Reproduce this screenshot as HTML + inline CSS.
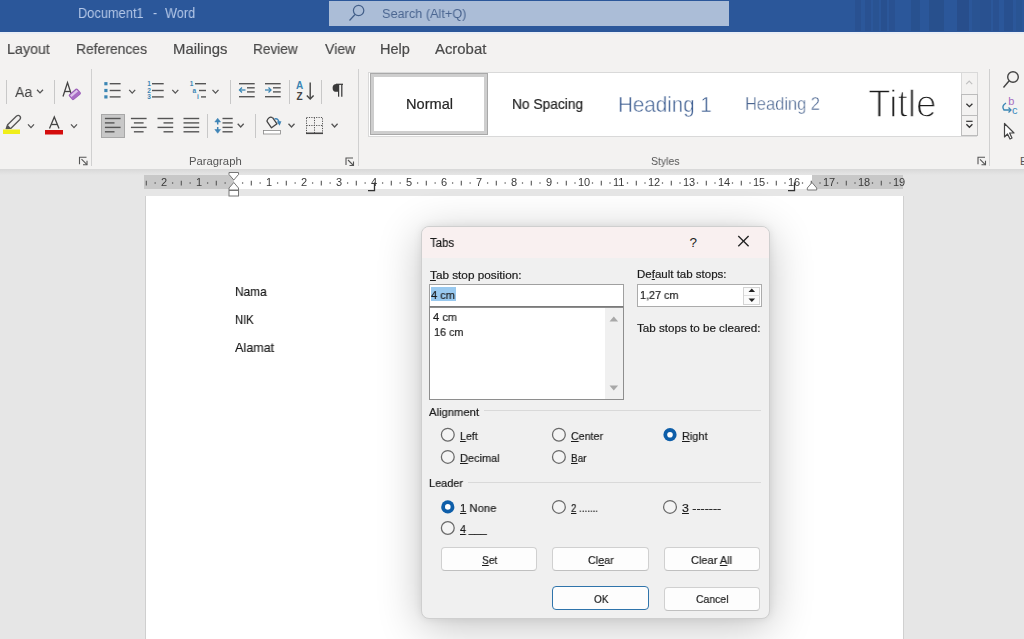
<!DOCTYPE html>
<html><head><meta charset="utf-8"><title>Tabs</title>
<style>
html,body{margin:0;padding:0;width:1024px;height:639px;overflow:hidden;background:#e6e6e6;}
body{position:relative;font-family:"Liberation Sans",sans-serif;}
.b{position:absolute;box-sizing:border-box;}
.t{position:absolute;white-space:pre;transform-origin:0 0;will-change:transform;font-family:"Liberation Sans",sans-serif;}
.t u{text-decoration:underline;text-underline-offset:0.5px;text-decoration-thickness:1px;}
svg.ov{position:absolute;left:0;top:0;}
</style></head><body>
<div class="b" style="left:0px;top:0px;width:1024px;height:32px;background:#2b579a;"></div>
<div class="b" style="left:855px;top:0px;width:6px;height:31px;background:rgba(30,45,80,0.12);"></div>
<div class="b" style="left:865px;top:0px;width:6px;height:31px;background:rgba(30,45,80,0.12);"></div>
<div class="b" style="left:873px;top:0px;width:6px;height:31px;background:rgba(30,45,80,0.1);"></div>
<div class="b" style="left:881px;top:0px;width:6px;height:31px;background:rgba(30,45,80,0.14);"></div>
<div class="b" style="left:889px;top:0px;width:6px;height:31px;background:rgba(30,45,80,0.12);"></div>
<div class="b" style="left:911px;top:0px;width:9px;height:31px;background:rgba(30,45,80,0.15);"></div>
<div class="b" style="left:929px;top:0px;width:15px;height:31px;background:rgba(30,45,80,0.17);"></div>
<div class="b" style="left:957px;top:0px;width:12px;height:31px;background:rgba(30,45,80,0.19);"></div>
<div class="b" style="left:972px;top:0px;width:8px;height:31px;background:rgba(30,45,80,0.1);"></div>
<div class="b" style="left:980px;top:0px;width:11px;height:31px;background:rgba(30,45,80,0.13);"></div>
<div class="b" style="left:993px;top:0px;width:6px;height:31px;background:rgba(30,45,80,0.12);"></div>
<div class="b" style="left:1004px;top:0px;width:9px;height:31px;background:rgba(30,45,80,0.14);"></div>
<div class="b" style="left:1016px;top:0px;width:6px;height:31px;background:rgba(30,45,80,0.08);"></div>
<div class="b" style="left:329px;top:1px;width:400px;height:25px;background:#abbdd7;"></div>
<div class="b" style="left:0px;top:32px;width:1024px;height:2px;background:#e9eef6;"></div>
<div class="b" style="left:0px;top:34px;width:1024px;height:135px;background:#f3f2f1;"></div>
<div class="b" style="left:0px;top:169px;width:1024px;height:6px;background:linear-gradient(#d8d8d8,#e6e6e6);"></div>
<div class="b" style="left:144px;top:175px;width:759px;height:14px;background:#c8c8c8;"></div>
<div class="b" style="left:233.8px;top:175px;width:578.2px;height:14px;background:#ffffff;"></div>
<div class="b" style="left:146px;top:196px;width:756.5px;height:443px;background:#ffffff;box-shadow:1px 0 0 #d0d0d0,-1px 0 0 #cfcfcf;"></div>
<div class="b" style="left:368px;top:71.5px;width:609px;height:65.5px;background:#ffffff;border:1px solid #d9d9d9;"></div>
<div class="b" style="left:369.5px;top:73px;width:118.5px;height:62px;border:1px solid #a9a9a9;box-shadow:inset 0 0 0 3px #cecece;"></div>
<div class="b" style="left:961.3px;top:72.3px;width:16.3px;height:64px;background:#f3f2f1;border:1px solid #d9d9d9;"></div>
<div class="b" style="left:961.3px;top:94px;width:16.3px;height:21.5px;border:1px solid #bcbcbc;"></div>
<div class="b" style="left:961.3px;top:114.8px;width:16.3px;height:21.5px;border:1px solid #bcbcbc;"></div>
<div class="b" style="left:100.8px;top:113.7px;width:24px;height:24.7px;background:#c8c8c8;border:1px solid #a8a8a8;"></div>
<div class="b" style="left:421px;top:226px;width:349px;height:393px;background:#f0f0f0;border:1px solid #cfcfcf;border-radius:8px;overflow:hidden;box-shadow:0 8px 44px rgba(0,0,0,0.24),0 0 8px rgba(0,0,0,0.08);"></div>
<div class="b" style="left:422px;top:227px;width:347px;height:31px;background:#f9f0f0;border-radius:7px 7px 0 0;"></div>
<div class="b" style="left:428.5px;top:284px;width:195px;height:22.5px;background:#fff;border:1px solid #a0a0a0;border-bottom-color:#7a7a7a;"></div>
<div class="b" style="left:431px;top:287.3px;width:24.7px;height:13.5px;background:#99c9ef;"></div>
<div class="b" style="left:428.5px;top:307px;width:195px;height:92.5px;background:#fff;border:1px solid #8e8e8e;"></div>
<div class="b" style="left:605px;top:308px;width:17.5px;height:90.5px;background:#f0f0f0;"></div>
<div class="b" style="left:636.5px;top:284.4px;width:125px;height:22.5px;background:#fff;border:1px solid #ababab;"></div>
<div class="b" style="left:742.5px;top:286.5px;width:17.5px;height:18.5px;background:#fbfbfb;border:1px solid #d4d4d4;"></div>
<div class="b" style="left:484.4px;top:410px;width:276.6px;height:1px;background:#d9d9d9;"></div>
<div class="b" style="left:467.8px;top:482px;width:293.2px;height:1px;background:#d9d9d9;"></div>
<div class="b" style="left:441.4px;top:546.7px;width:96px;height:24.6px;background:#fdfdfd;border:1px solid #d0d0d0;border-bottom-color:#c0c0c0;border-radius:4px;"></div>
<div class="b" style="left:552.2px;top:546.7px;width:97px;height:24.6px;background:#fdfdfd;border:1px solid #d0d0d0;border-bottom-color:#c0c0c0;border-radius:4px;"></div>
<div class="b" style="left:663.6px;top:546.7px;width:96.7px;height:24.6px;background:#fdfdfd;border:1px solid #d0d0d0;border-bottom-color:#c0c0c0;border-radius:4px;"></div>
<div class="b" style="left:663.6px;top:586.6px;width:96.7px;height:24px;background:#fdfdfd;border:1px solid #d0d0d0;border-bottom-color:#c0c0c0;border-radius:4px;"></div>
<div class="b" style="left:552.2px;top:585.9px;width:97px;height:24.6px;background:#fdfdfd;border:1.5px solid #2f74ab;border-radius:4px;"></div>
<svg class="ov" width="1024" height="639" viewBox="0 0 1024 639">
<g stroke="#c8c8c8" stroke-width="1">
<line x1="6.5" y1="80" x2="6.5" y2="104"/>
<line x1="54.5" y1="80" x2="54.5" y2="104"/>
<line x1="230.5" y1="80" x2="230.5" y2="104"/>
<line x1="289.5" y1="80" x2="289.5" y2="104"/>
<line x1="321.5" y1="80" x2="321.5" y2="104"/>
<line x1="207.5" y1="114" x2="207.5" y2="138"/>
<line x1="255.5" y1="114" x2="255.5" y2="138"/>
</g>
<g stroke="#d0d0d0" stroke-width="1">
<line x1="91.5" y1="69" x2="91.5" y2="166"/>
<line x1="358.5" y1="69" x2="358.5" y2="166"/>
<line x1="989.5" y1="69" x2="989.5" y2="166"/>
</g>
<g stroke="#44608a" stroke-width="1.25" fill="none"><circle cx="358.6" cy="10.5" r="5.2"/><line x1="355" y1="14.5" x2="349.5" y2="20.5"/></g>
<polyline points="37.0,89.7 40.0,92.9 43.0,89.7" fill="none" stroke="#555" stroke-width="1.3"/>
<polyline points="28.0,124.4 31.0,127.6 34.0,124.4" fill="none" stroke="#555" stroke-width="1.3"/>
<polyline points="71.0,124.4 74.0,127.6 77.0,124.4" fill="none" stroke="#555" stroke-width="1.3"/>
<polyline points="129.2,89.9 132.2,93.1 135.2,89.9" fill="none" stroke="#555" stroke-width="1.3"/>
<polyline points="172.3,89.9 175.3,93.1 178.3,89.9" fill="none" stroke="#555" stroke-width="1.3"/>
<polyline points="212.5,89.9 215.5,93.1 218.5,89.9" fill="none" stroke="#555" stroke-width="1.3"/>
<polyline points="237.7,123.8 240.7,127.0 243.7,123.8" fill="none" stroke="#555" stroke-width="1.3"/>
<polyline points="288.5,123.8 291.5,127.0 294.5,123.8" fill="none" stroke="#555" stroke-width="1.3"/>
<polyline points="331.6,123.8 334.6,127.0 337.6,123.8" fill="none" stroke="#555" stroke-width="1.3"/>
<g fill="none" stroke="#444" stroke-width="1.3"><polyline points="63,96.5 67.5,82.5 72,96.5"/><line x1="64.5" y1="91.5" x2="70.5" y2="91.5"/></g>
<g transform="translate(74.8,94.3) rotate(-40)"><rect x="-5" y="-3" width="10" height="6" rx="0.8" fill="#dcc3ea" stroke="#9b5fb8" stroke-width="1.3"/><rect x="-5" y="0" width="10" height="3" fill="#a86cc4"/></g>
<path d="M6.2,128.6 L7.6,124.8 L16.3,116.3 Q18.3,114.6 19.9,116.2 Q21.4,117.8 19.6,119.8 L11,128.3 Z" fill="none" stroke="#555" stroke-width="1.3" stroke-linejoin="round"/><path d="M6.2,128.6 L7.6,124.8 L11,128.3 Z" fill="#555"/>
<rect x="3" y="129.5" width="17" height="4.5" fill="#f0ee1a"/>
<g fill="none" stroke="#444" stroke-width="1.3"><polyline points="49.5,128.5 54.3,117 59,128.5"/><line x1="51.3" y1="124.5" x2="57.3" y2="124.5"/></g>
<rect x="45" y="130" width="18" height="4.5" fill="#d40d0d"/>
<rect x="104.3" y="82.10000000000001" width="3.2" height="3.2" fill="#3b86b4"/>
<line x1="109.7" y1="83.7" x2="120.6" y2="83.7" stroke="#555" stroke-width="1.4"/>
<rect x="104.3" y="88.9" width="3.2" height="3.2" fill="#3b86b4"/>
<line x1="109.7" y1="90.5" x2="120.6" y2="90.5" stroke="#555" stroke-width="1.4"/>
<rect x="104.3" y="95.30000000000001" width="3.2" height="3.2" fill="#3b86b4"/>
<line x1="109.7" y1="96.9" x2="120.6" y2="96.9" stroke="#555" stroke-width="1.4"/>
<text x="147.3" y="86.2" font-size="6.5" fill="#3b86b4" font-family="Liberation Sans" font-weight="bold">1</text>
<line x1="152" y1="83.7" x2="163.7" y2="83.7" stroke="#555" stroke-width="1.4"/>
<text x="147.3" y="93.0" font-size="6.5" fill="#3b86b4" font-family="Liberation Sans" font-weight="bold">2</text>
<line x1="152" y1="90.5" x2="163.7" y2="90.5" stroke="#555" stroke-width="1.4"/>
<text x="147.3" y="99.4" font-size="6.5" fill="#3b86b4" font-family="Liberation Sans" font-weight="bold">3</text>
<line x1="152" y1="96.9" x2="163.7" y2="96.9" stroke="#555" stroke-width="1.4"/>
<text x="189.7" y="86.2" font-size="6.5" fill="#3b86b4" font-family="Liberation Sans" font-weight="bold">1</text>
<line x1="195" y1="83.7" x2="206" y2="83.7" stroke="#555" stroke-width="1.4"/>
<text x="192.5" y="93" font-size="6.5" fill="#3b86b4" font-family="Liberation Sans" font-weight="bold">a</text>
<line x1="199" y1="90.5" x2="206" y2="90.5" stroke="#555" stroke-width="1.4"/>
<text x="197" y="99.4" font-size="6.5" fill="#3b86b4" font-family="Liberation Sans" font-weight="bold">i</text>
<line x1="201" y1="96.9" x2="206" y2="96.9" stroke="#555" stroke-width="1.4"/>
<line x1="104.9" y1="118.5" x2="120.6" y2="118.5" stroke="#555" stroke-width="1.4"/>
<line x1="104.9" y1="122.9" x2="114.5" y2="122.9" stroke="#555" stroke-width="1.4"/>
<line x1="104.9" y1="127.4" x2="120.6" y2="127.4" stroke="#555" stroke-width="1.4"/>
<line x1="104.9" y1="131.8" x2="114.5" y2="131.8" stroke="#555" stroke-width="1.4"/>
<line x1="130.9" y1="118.5" x2="146.6" y2="118.5" stroke="#555" stroke-width="1.4"/>
<line x1="133.9" y1="122.9" x2="143.6" y2="122.9" stroke="#555" stroke-width="1.4"/>
<line x1="130.9" y1="127.4" x2="146.6" y2="127.4" stroke="#555" stroke-width="1.4"/>
<line x1="133.9" y1="131.8" x2="143.6" y2="131.8" stroke="#555" stroke-width="1.4"/>
<line x1="157.5" y1="118.5" x2="173.2" y2="118.5" stroke="#555" stroke-width="1.4"/>
<line x1="163.5" y1="122.9" x2="173.2" y2="122.9" stroke="#555" stroke-width="1.4"/>
<line x1="157.5" y1="127.4" x2="173.2" y2="127.4" stroke="#555" stroke-width="1.4"/>
<line x1="163.5" y1="131.8" x2="173.2" y2="131.8" stroke="#555" stroke-width="1.4"/>
<line x1="183.5" y1="118.5" x2="199.2" y2="118.5" stroke="#555" stroke-width="1.4"/>
<line x1="183.5" y1="122.9" x2="199.2" y2="122.9" stroke="#555" stroke-width="1.4"/>
<line x1="183.5" y1="127.4" x2="199.2" y2="127.4" stroke="#555" stroke-width="1.4"/>
<line x1="183.5" y1="131.8" x2="199.2" y2="131.8" stroke="#555" stroke-width="1.4"/>
<line x1="222.5" y1="118.5" x2="232.7" y2="118.5" stroke="#555" stroke-width="1.4"/>
<line x1="222.5" y1="122.9" x2="232.7" y2="122.9" stroke="#555" stroke-width="1.4"/>
<line x1="222.5" y1="127.4" x2="232.7" y2="127.4" stroke="#555" stroke-width="1.4"/>
<line x1="222.5" y1="131.8" x2="232.7" y2="131.8" stroke="#555" stroke-width="1.4"/>
<g stroke="#3f84b6" stroke-width="1.5" fill="#3f84b6"><line x1="217.7" y1="121" x2="217.7" y2="124.5"/><path d="M214.8,122 L217.7,118.2 L220.6,122 Z" stroke-width="0.5"/><line x1="217.7" y1="127" x2="217.7" y2="130.5"/><path d="M214.8,129.5 L217.7,133.3 L220.6,129.5 Z" stroke-width="0.5"/></g>
<line x1="239" y1="83.7" x2="254.7" y2="83.7" stroke="#555" stroke-width="1.4"/>
<line x1="247" y1="87.8" x2="254.7" y2="87.8" stroke="#555" stroke-width="1.4"/>
<line x1="247" y1="91.9" x2="254.7" y2="91.9" stroke="#555" stroke-width="1.4"/>
<line x1="239" y1="96.7" x2="254.7" y2="96.7" stroke="#555" stroke-width="1.4"/>
<g stroke="#3b86b4" stroke-width="1.3" fill="none"><line x1="239.5" y1="90" x2="245.5" y2="90"/><polyline points="242,87.5 239.5,90 242,92.5"/></g>
<line x1="265" y1="83.7" x2="280.7" y2="83.7" stroke="#555" stroke-width="1.4"/>
<line x1="273" y1="87.8" x2="280.7" y2="87.8" stroke="#555" stroke-width="1.4"/>
<line x1="273" y1="91.9" x2="280.7" y2="91.9" stroke="#555" stroke-width="1.4"/>
<line x1="265" y1="96.7" x2="280.7" y2="96.7" stroke="#555" stroke-width="1.4"/>
<g stroke="#3b86b4" stroke-width="1.3" fill="none"><line x1="265" y1="90" x2="271" y2="90"/><polyline points="268.5,87.5 271,90 268.5,92.5"/></g>
<text x="296" y="89.4" font-size="10" fill="#3b86b4" font-family="Liberation Sans" font-weight="bold">A</text>
<text x="296.5" y="99.8" font-size="10" fill="#444" font-family="Liberation Sans" font-weight="bold">Z</text>
<g stroke="#444" stroke-width="1.4" fill="none"><line x1="310.2" y1="82.5" x2="310.2" y2="99"/><polyline points="306.8,95.5 310.2,99 313.6,95.5"/></g>
<g stroke="#3a3a3a" stroke-width="1.25" fill="none"><line x1="338.6" y1="84.3" x2="338.6" y2="96.7"/><line x1="341.8" y1="84.3" x2="341.8" y2="96.7"/><line x1="336" y1="84.3" x2="343" y2="84.3"/></g><path d="M338.6,84 L336.5,84 Q332.6,84 332.6,87.9 Q332.6,91.8 336.5,91.8 L338.6,91.8 Z" fill="#3a3a3a"/>
<path d="M266.8,121.2 L271.5,127.8 L277,123.8 L272.6,117.6" fill="none" stroke="#444" stroke-width="1.3" stroke-linejoin="round"/><path d="M266.8,121.2 Q268.5,116 272.6,117.6" fill="none" stroke="#444" stroke-width="1.2"/>
<path d="M274.5,119 Q278.5,117.5 279.5,124" fill="none" stroke="#3f84b6" stroke-width="1.4"/><path d="M276.8,121.5 L279.6,125.8 L281.4,121.3 Z" fill="#3f84b6"/>
<rect x="263.5" y="130.5" width="17" height="3.5" fill="#fff" stroke="#888" stroke-width="0.8"/>
<g fill="none" stroke="#555" stroke-width="1" stroke-dasharray="1.2,1.2"><rect x="306.5" y="117.5" width="16" height="16"/><line x1="314.5" y1="117.5" x2="314.5" y2="133.5"/><line x1="306.5" y1="125.5" x2="322.5" y2="125.5"/></g>
<line x1="306" y1="133.3" x2="323" y2="133.3" stroke="#444" stroke-width="1.6"/>
<g fill="none" stroke="#555" stroke-width="1.1"><polyline points="79.5,164.2 79.5,157.2 86.5,157.2"/><line x1="81.5" y1="159.2" x2="87.0" y2="164.7"/><polyline points="83.0,164.7 87.0,164.7 87.0,160.7"/></g>
<g fill="none" stroke="#555" stroke-width="1.1"><polyline points="346,165 346,158 353,158"/><line x1="348" y1="160" x2="353.5" y2="165.5"/><polyline points="349.5,165.5 353.5,165.5 353.5,161.5"/></g>
<g fill="none" stroke="#555" stroke-width="1.1"><polyline points="978,164.3 978,157.3 985,157.3"/><line x1="980" y1="159.3" x2="985.5" y2="164.8"/><polyline points="981.5,164.8 985.5,164.8 985.5,160.8"/></g>
<polyline points="966.2,84.2 969.2,81.2 972.2,84.2" fill="none" stroke="#c0c0c0" stroke-width="1.2"/>
<polyline points="966.4,103.7 969.4,106.7 972.4,103.7" fill="none" stroke="#333" stroke-width="1.3"/>
<line x1="966.2" y1="121.3" x2="972.6" y2="121.3" stroke="#333" stroke-width="1.2"/>
<polyline points="966.4,124.3 969.4,127.3 972.4,124.3" fill="none" stroke="#333" stroke-width="1.3"/>
<g fill="none" stroke="#444" stroke-width="1.4"><circle cx="1013" cy="77" r="5.3"/><line x1="1009.2" y1="80.8" x2="1003.5" y2="87.5"/></g>
<text x="1008.2" y="105.2" font-size="11" fill="#a66bc0" font-family="Liberation Sans">b</text>
<text x="1012" y="113.5" font-size="11" fill="#3b8cc0" font-family="Liberation Sans">c</text>
<path d="M1006,103 Q1001,106 1004,110 L1011,110" fill="none" stroke="#3b86b4" stroke-width="1.4"/><polyline points="1008.5,107.5 1011,110 1008.5,112.5" fill="none" stroke="#3b86b4" stroke-width="1.3"/>
<path d="M1004.5,123.5 L1004.5,137 L1007.5,134 L1010,139 L1012,138 L1009.6,133 L1014,133 Z" fill="#fff" stroke="#444" stroke-width="1.2" stroke-linejoin="round"/>
<text x="1020" y="165" font-size="11" fill="#555" font-family="Liberation Sans">E</text>
<line x1="146.3" y1="180.8" x2="146.3" y2="185.6" stroke="#555" stroke-width="1.1"/>
<line x1="181.3" y1="180.8" x2="181.3" y2="185.6" stroke="#555" stroke-width="1.1"/>
<line x1="216.3" y1="180.8" x2="216.3" y2="185.6" stroke="#555" stroke-width="1.1"/>
<line x1="251.3" y1="180.8" x2="251.3" y2="185.6" stroke="#555" stroke-width="1.1"/>
<line x1="286.3" y1="180.8" x2="286.3" y2="185.6" stroke="#555" stroke-width="1.1"/>
<line x1="321.3" y1="180.8" x2="321.3" y2="185.6" stroke="#555" stroke-width="1.1"/>
<line x1="356.3" y1="180.8" x2="356.3" y2="185.6" stroke="#555" stroke-width="1.1"/>
<line x1="391.3" y1="180.8" x2="391.3" y2="185.6" stroke="#555" stroke-width="1.1"/>
<line x1="426.3" y1="180.8" x2="426.3" y2="185.6" stroke="#555" stroke-width="1.1"/>
<line x1="461.3" y1="180.8" x2="461.3" y2="185.6" stroke="#555" stroke-width="1.1"/>
<line x1="496.3" y1="180.8" x2="496.3" y2="185.6" stroke="#555" stroke-width="1.1"/>
<line x1="531.3" y1="180.8" x2="531.3" y2="185.6" stroke="#555" stroke-width="1.1"/>
<line x1="566.3" y1="180.8" x2="566.3" y2="185.6" stroke="#555" stroke-width="1.1"/>
<line x1="601.3" y1="180.8" x2="601.3" y2="185.6" stroke="#555" stroke-width="1.1"/>
<line x1="636.3" y1="180.8" x2="636.3" y2="185.6" stroke="#555" stroke-width="1.1"/>
<line x1="671.3" y1="180.8" x2="671.3" y2="185.6" stroke="#555" stroke-width="1.1"/>
<line x1="706.3" y1="180.8" x2="706.3" y2="185.6" stroke="#555" stroke-width="1.1"/>
<line x1="741.3" y1="180.8" x2="741.3" y2="185.6" stroke="#555" stroke-width="1.1"/>
<line x1="776.3" y1="180.8" x2="776.3" y2="185.6" stroke="#555" stroke-width="1.1"/>
<line x1="811.3" y1="180.8" x2="811.3" y2="185.6" stroke="#555" stroke-width="1.1"/>
<line x1="846.3" y1="180.8" x2="846.3" y2="185.6" stroke="#555" stroke-width="1.1"/>
<line x1="881.3" y1="180.8" x2="881.3" y2="185.6" stroke="#555" stroke-width="1.1"/>
<circle cx="155.1" cy="182.9" r="0.75" fill="#555"/>
<circle cx="172.6" cy="182.9" r="0.75" fill="#555"/>
<circle cx="190.1" cy="182.9" r="0.75" fill="#555"/>
<circle cx="207.6" cy="182.9" r="0.75" fill="#555"/>
<circle cx="225.1" cy="182.9" r="0.75" fill="#555"/>
<circle cx="242.6" cy="182.9" r="0.75" fill="#555"/>
<circle cx="260.1" cy="182.9" r="0.75" fill="#555"/>
<circle cx="277.6" cy="182.9" r="0.75" fill="#555"/>
<circle cx="295.1" cy="182.9" r="0.75" fill="#555"/>
<circle cx="312.6" cy="182.9" r="0.75" fill="#555"/>
<circle cx="330.1" cy="182.9" r="0.75" fill="#555"/>
<circle cx="347.6" cy="182.9" r="0.75" fill="#555"/>
<circle cx="365.1" cy="182.9" r="0.75" fill="#555"/>
<circle cx="382.6" cy="182.9" r="0.75" fill="#555"/>
<circle cx="400.1" cy="182.9" r="0.75" fill="#555"/>
<circle cx="417.6" cy="182.9" r="0.75" fill="#555"/>
<circle cx="435.1" cy="182.9" r="0.75" fill="#555"/>
<circle cx="452.6" cy="182.9" r="0.75" fill="#555"/>
<circle cx="470.1" cy="182.9" r="0.75" fill="#555"/>
<circle cx="487.6" cy="182.9" r="0.75" fill="#555"/>
<circle cx="505.1" cy="182.9" r="0.75" fill="#555"/>
<circle cx="522.5" cy="182.9" r="0.75" fill="#555"/>
<circle cx="540.0" cy="182.9" r="0.75" fill="#555"/>
<circle cx="557.5" cy="182.9" r="0.75" fill="#555"/>
<circle cx="575.0" cy="182.9" r="0.75" fill="#555"/>
<circle cx="592.5" cy="182.9" r="0.75" fill="#555"/>
<circle cx="610.0" cy="182.9" r="0.75" fill="#555"/>
<circle cx="627.5" cy="182.9" r="0.75" fill="#555"/>
<circle cx="645.0" cy="182.9" r="0.75" fill="#555"/>
<circle cx="662.5" cy="182.9" r="0.75" fill="#555"/>
<circle cx="680.0" cy="182.9" r="0.75" fill="#555"/>
<circle cx="697.5" cy="182.9" r="0.75" fill="#555"/>
<circle cx="715.0" cy="182.9" r="0.75" fill="#555"/>
<circle cx="732.5" cy="182.9" r="0.75" fill="#555"/>
<circle cx="750.0" cy="182.9" r="0.75" fill="#555"/>
<circle cx="767.5" cy="182.9" r="0.75" fill="#555"/>
<circle cx="785.0" cy="182.9" r="0.75" fill="#555"/>
<circle cx="802.5" cy="182.9" r="0.75" fill="#555"/>
<circle cx="820.0" cy="182.9" r="0.75" fill="#555"/>
<circle cx="837.5" cy="182.9" r="0.75" fill="#555"/>
<circle cx="855.0" cy="182.9" r="0.75" fill="#555"/>
<circle cx="872.5" cy="182.9" r="0.75" fill="#555"/>
<circle cx="890.0" cy="182.9" r="0.75" fill="#555"/>
<path d="M229,172.5 L238.5,172.5 L238.5,174.5 L233.8,180 L229,174.5 Z" fill="#fff" stroke="#777" stroke-width="1"/>
<path d="M233.8,182.5 L238.5,188 L238.5,190 L229,190 L229,188 Z" fill="#fff" stroke="#777" stroke-width="1"/>
<rect x="229" y="190.5" width="9.5" height="5.5" fill="#fff" stroke="#777" stroke-width="1"/>
<path d="M374.5,182.5 L374.5,190.6 L368,190.6" fill="none" stroke="#333" stroke-width="1.3"/>
<path d="M794.5,182.5 L794.5,190.6 L788,190.6" fill="none" stroke="#333" stroke-width="1.3"/>
<path d="M812,182.5 L816.7,188 L816.7,190 L807.3,190 L807.3,188 Z" fill="#fff" stroke="#777" stroke-width="1"/>
<g stroke="#222" stroke-width="1.3" fill="none"><line x1="738.3" y1="236" x2="748.6" y2="246.3"/><line x1="748.6" y1="236" x2="738.3" y2="246.3"/></g>
<text x="689.5" y="246.5" font-size="13.5" fill="#222" font-family="Liberation Sans">?</text>
<path d="M609.5,321.5 L613.8,316.5 L618.1,321.5 Z" fill="#a8a8a8"/>
<path d="M609.5,385.5 L613.8,390.5 L618.1,385.5 Z" fill="#a8a8a8"/>
<path d="M748.5,292 L751.8,288.5 L755.1,292 Z" fill="#222"/>
<path d="M748.5,298.5 L751.8,302 L755.1,298.5 Z" fill="#222"/>
<line x1="744" y1="295.5" x2="760" y2="295.5" stroke="#e0e0e0" stroke-width="1"/>
<circle cx="447.8" cy="434.7" r="6.4" fill="#f4f4f4" stroke="#6a6a6a" stroke-width="1.25"/>
<circle cx="558.9" cy="434.7" r="6.4" fill="#f4f4f4" stroke="#6a6a6a" stroke-width="1.25"/>
<circle cx="670" cy="434.7" r="6.6" fill="#0e5ea9"/><circle cx="670" cy="434.7" r="2.8" fill="#fff"/>
<circle cx="447.8" cy="456.9" r="6.4" fill="#f4f4f4" stroke="#6a6a6a" stroke-width="1.25"/>
<circle cx="558.9" cy="456.9" r="6.4" fill="#f4f4f4" stroke="#6a6a6a" stroke-width="1.25"/>
<circle cx="447.8" cy="506.9" r="6.6" fill="#0e5ea9"/><circle cx="447.8" cy="506.9" r="2.8" fill="#fff"/>
<circle cx="558.9" cy="506.9" r="6.4" fill="#f4f4f4" stroke="#6a6a6a" stroke-width="1.25"/>
<circle cx="670" cy="506.9" r="6.4" fill="#f4f4f4" stroke="#6a6a6a" stroke-width="1.25"/>
<circle cx="447.8" cy="528" r="6.4" fill="#f4f4f4" stroke="#6a6a6a" stroke-width="1.25"/>
</svg>
<div class="t" style="left:78.20px;top:6.15px;font-size:14px;line-height:14px;color:#b5c8e8;transform:scaleX(0.9163);">Document1</div>
<div class="t" style="left:152.70px;top:6.15px;font-size:14px;line-height:14px;color:#b5c8e8;transform:scaleX(0.8794);">-</div>
<div class="t" style="left:165.00px;top:6.15px;font-size:14px;line-height:14px;color:#b5c8e8;transform:scaleX(0.9068);">Word</div>
<div class="t" style="left:381.70px;top:6.80px;font-size:13.7px;line-height:13.7px;color:#4a6590;transform:scaleX(0.9285);">Search (Alt+Q)</div>
<div class="t" style="left:7.00px;top:41.63px;font-size:14.5px;line-height:14.5px;color:#4a4a4a;-webkit-text-stroke:0.2px #4a4a4a;transform:scaleX(0.9831);">Layout</div>
<div class="t" style="left:76.40px;top:41.63px;font-size:14.5px;line-height:14.5px;color:#4a4a4a;-webkit-text-stroke:0.2px #4a4a4a;transform:scaleX(0.9575);">References</div>
<div class="t" style="left:172.50px;top:41.63px;font-size:14.5px;line-height:14.5px;color:#4a4a4a;-webkit-text-stroke:0.2px #4a4a4a;transform:scaleX(1.0247);">Mailings</div>
<div class="t" style="left:253.20px;top:41.63px;font-size:14.5px;line-height:14.5px;color:#4a4a4a;-webkit-text-stroke:0.2px #4a4a4a;transform:scaleX(0.9402);">Review</div>
<div class="t" style="left:324.60px;top:41.63px;font-size:14.5px;line-height:14.5px;color:#4a4a4a;-webkit-text-stroke:0.2px #4a4a4a;transform:scaleX(0.9690);">View</div>
<div class="t" style="left:380.20px;top:41.63px;font-size:14.5px;line-height:14.5px;color:#4a4a4a;-webkit-text-stroke:0.2px #4a4a4a;transform:scaleX(0.9859);">Help</div>
<div class="t" style="left:435.00px;top:41.63px;font-size:14.5px;line-height:14.5px;color:#4a4a4a;-webkit-text-stroke:0.2px #4a4a4a;transform:scaleX(1.0266);">Acrobat</div>
<div class="t" style="left:14.50px;top:84.26px;font-size:15.4px;line-height:15.4px;color:#444;transform:scaleX(0.9190);">Aa</div>
<div class="t" style="left:189.40px;top:156.27px;font-size:10.9px;line-height:10.9px;color:#555;transform:scaleX(1.0362);">Paragraph</div>
<div class="t" style="left:651.00px;top:156.27px;font-size:10.9px;line-height:10.9px;color:#555;transform:scaleX(0.9610);">Styles</div>
<div class="t" style="left:405.70px;top:97.30px;font-size:14.3px;line-height:14.3px;color:#262626;-webkit-text-stroke:0.2px #262626;transform:scaleX(1.0201);">Normal</div>
<div class="t" style="left:511.90px;top:97.30px;font-size:14.3px;line-height:14.3px;color:#262626;-webkit-text-stroke:0.2px #262626;transform:scaleX(0.9619);">No Spacing</div>
<div class="t" style="left:617.60px;top:93.85px;font-size:22.5px;line-height:22.5px;color:#3f5f92;-webkit-text-stroke:0.45px #fff;transform:scaleX(0.9144);">Heading 1</div>
<div class="t" style="left:745.20px;top:95.44px;font-size:18.5px;line-height:18.5px;color:#4a6590;-webkit-text-stroke:0.35px #fff;transform:scaleX(0.8880);">Heading 2</div>
<div class="t" style="left:868.40px;top:84.69px;font-size:38.4px;line-height:38.4px;color:#1a1a1a;-webkit-text-stroke:1.4px #fff;transform:scaleX(0.9648);">Title</div>
<div class="t" style="left:195.74px;top:177.29px;font-size:11px;line-height:11px;color:#3a3a3a;">1</div>
<div class="t" style="left:160.74px;top:177.29px;font-size:11px;line-height:11px;color:#3a3a3a;">2</div>
<div class="t" style="left:265.74px;top:177.29px;font-size:11px;line-height:11px;color:#3a3a3a;">1</div>
<div class="t" style="left:300.74px;top:177.29px;font-size:11px;line-height:11px;color:#3a3a3a;">2</div>
<div class="t" style="left:335.74px;top:177.29px;font-size:11px;line-height:11px;color:#3a3a3a;">3</div>
<div class="t" style="left:370.74px;top:177.29px;font-size:11px;line-height:11px;color:#3a3a3a;">4</div>
<div class="t" style="left:405.74px;top:177.29px;font-size:11px;line-height:11px;color:#3a3a3a;">5</div>
<div class="t" style="left:440.74px;top:177.29px;font-size:11px;line-height:11px;color:#3a3a3a;">6</div>
<div class="t" style="left:475.74px;top:177.29px;font-size:11px;line-height:11px;color:#3a3a3a;">7</div>
<div class="t" style="left:510.74px;top:177.29px;font-size:11px;line-height:11px;color:#3a3a3a;">8</div>
<div class="t" style="left:545.74px;top:177.29px;font-size:11px;line-height:11px;color:#3a3a3a;">9</div>
<div class="t" style="left:577.68px;top:177.29px;font-size:11px;line-height:11px;color:#3a3a3a;">10</div>
<div class="t" style="left:613.09px;top:177.29px;font-size:11px;line-height:11px;color:#3a3a3a;">11</div>
<div class="t" style="left:647.68px;top:177.29px;font-size:11px;line-height:11px;color:#3a3a3a;">12</div>
<div class="t" style="left:682.68px;top:177.29px;font-size:11px;line-height:11px;color:#3a3a3a;">13</div>
<div class="t" style="left:717.68px;top:177.29px;font-size:11px;line-height:11px;color:#3a3a3a;">14</div>
<div class="t" style="left:752.68px;top:177.29px;font-size:11px;line-height:11px;color:#3a3a3a;">15</div>
<div class="t" style="left:787.68px;top:177.29px;font-size:11px;line-height:11px;color:#3a3a3a;">16</div>
<div class="t" style="left:822.68px;top:177.29px;font-size:11px;line-height:11px;color:#3a3a3a;">17</div>
<div class="t" style="left:857.68px;top:177.29px;font-size:11px;line-height:11px;color:#3a3a3a;">18</div>
<div class="t" style="left:892.68px;top:177.29px;font-size:11px;line-height:11px;color:#3a3a3a;">19</div>
<div class="t" style="left:234.90px;top:286.46px;font-size:12.8px;line-height:12.8px;color:#161616;-webkit-text-stroke:0.15px #161616;transform:scaleX(0.9287);">Nama</div>
<div class="t" style="left:234.90px;top:314.16px;font-size:12.8px;line-height:12.8px;color:#161616;-webkit-text-stroke:0.15px #161616;transform:scaleX(0.8766);">NIK</div>
<div class="t" style="left:234.90px;top:342.36px;font-size:12.8px;line-height:12.8px;color:#161616;-webkit-text-stroke:0.15px #161616;transform:scaleX(0.9817);">Alamat</div>
<div class="t" style="left:430.30px;top:236.72px;font-size:12.5px;line-height:12.5px;color:#1b1b1b;-webkit-text-stroke:0.2px #1b1b1b;transform:scaleX(0.9090);">Tabs</div>
<div class="t" style="left:429.60px;top:269.67px;font-size:11.5px;line-height:11.5px;color:#1b1b1b;-webkit-text-stroke:0.2px #1b1b1b;transform:scaleX(1.0223);"><u>T</u>ab stop position:</div>
<div class="t" style="left:431.40px;top:289.97px;font-size:11.5px;line-height:11.5px;color:#1b1b1b;-webkit-text-stroke:0.2px #1b1b1b;transform:scaleX(0.9631);">4 cm</div>
<div class="t" style="left:432.90px;top:312.23px;font-size:11.3px;line-height:11.3px;color:#1b1b1b;-webkit-text-stroke:0.2px #1b1b1b;transform:scaleX(0.9804);">4 cm</div>
<div class="t" style="left:433.50px;top:326.83px;font-size:11.3px;line-height:11.3px;color:#1b1b1b;-webkit-text-stroke:0.2px #1b1b1b;transform:scaleX(0.9589);">16 cm</div>
<div class="t" style="left:636.90px;top:269.47px;font-size:11.5px;line-height:11.5px;color:#1b1b1b;-webkit-text-stroke:0.2px #1b1b1b;">De<u>f</u>ault tab stops:</div>
<div class="t" style="left:639.70px;top:290.17px;font-size:11.5px;line-height:11.5px;color:#1b1b1b;-webkit-text-stroke:0.2px #1b1b1b;transform:scaleX(0.9412);">1,27 cm</div>
<div class="t" style="left:637.30px;top:322.97px;font-size:11.5px;line-height:11.5px;color:#1b1b1b;-webkit-text-stroke:0.2px #1b1b1b;transform:scaleX(1.0114);">Tab stops to be cleared:</div>
<div class="t" style="left:428.90px;top:406.57px;font-size:11.5px;line-height:11.5px;color:#1b1b1b;-webkit-text-stroke:0.2px #1b1b1b;transform:scaleX(0.9777);">Alignment</div>
<div class="t" style="left:459.60px;top:431.07px;font-size:11.5px;line-height:11.5px;color:#1b1b1b;-webkit-text-stroke:0.2px #1b1b1b;transform:scaleX(0.9228);"><u>L</u>eft</div>
<div class="t" style="left:459.60px;top:452.57px;font-size:11.5px;line-height:11.5px;color:#1b1b1b;-webkit-text-stroke:0.2px #1b1b1b;transform:scaleX(0.9558);"><u>D</u>ecimal</div>
<div class="t" style="left:570.70px;top:431.07px;font-size:11.5px;line-height:11.5px;color:#1b1b1b;-webkit-text-stroke:0.2px #1b1b1b;transform:scaleX(0.9271);"><u>C</u>enter</div>
<div class="t" style="left:570.70px;top:452.57px;font-size:11.5px;line-height:11.5px;color:#1b1b1b;-webkit-text-stroke:0.2px #1b1b1b;transform:scaleX(0.8661);"><u>B</u>ar</div>
<div class="t" style="left:681.80px;top:431.07px;font-size:11.5px;line-height:11.5px;color:#1b1b1b;-webkit-text-stroke:0.2px #1b1b1b;transform:scaleX(0.9498);"><u>R</u>ight</div>
<div class="t" style="left:428.90px;top:478.17px;font-size:11.5px;line-height:11.5px;color:#1b1b1b;-webkit-text-stroke:0.2px #1b1b1b;transform:scaleX(0.9495);">Leader</div>
<div class="t" style="left:459.60px;top:502.57px;font-size:11.5px;line-height:11.5px;color:#1b1b1b;-webkit-text-stroke:0.2px #1b1b1b;transform:scaleX(0.9816);"><u>1</u> None</div>
<div class="t" style="left:570.70px;top:502.57px;font-size:11.5px;line-height:11.5px;color:#1b1b1b;-webkit-text-stroke:0.2px #1b1b1b;transform:scaleX(0.8480);"><u>2</u> .......</div>
<div class="t" style="left:681.80px;top:502.57px;font-size:11.5px;line-height:11.5px;color:#1b1b1b;-webkit-text-stroke:0.2px #1b1b1b;transform:scaleX(1.0770);"><u>3</u> -------</div>
<div class="t" style="left:459.60px;top:523.77px;font-size:11.5px;line-height:11.5px;color:#1b1b1b;-webkit-text-stroke:0.2px #1b1b1b;transform:scaleX(0.9243);"><u>4</u> ___</div>
<div class="t" style="left:481.90px;top:554.97px;font-size:11.5px;line-height:11.5px;color:#1b1b1b;-webkit-text-stroke:0.2px #1b1b1b;transform:scaleX(0.8922);"><u>S</u>et</div>
<div class="t" style="left:587.80px;top:554.97px;font-size:11.5px;line-height:11.5px;color:#1b1b1b;-webkit-text-stroke:0.2px #1b1b1b;transform:scaleX(0.9352);">Cl<u>e</u>ar</div>
<div class="t" style="left:691.00px;top:554.97px;font-size:11.5px;line-height:11.5px;color:#1b1b1b;-webkit-text-stroke:0.2px #1b1b1b;transform:scaleX(0.9596);">Clear <u>A</u>ll</div>
<div class="t" style="left:593.60px;top:594.47px;font-size:11.5px;line-height:11.5px;color:#1b1b1b;-webkit-text-stroke:0.2px #1b1b1b;transform:scaleX(0.8727);">OK</div>
<div class="t" style="left:695.80px;top:594.47px;font-size:11.5px;line-height:11.5px;color:#1b1b1b;-webkit-text-stroke:0.2px #1b1b1b;transform:scaleX(0.9079);">Cancel</div>
</body></html>
